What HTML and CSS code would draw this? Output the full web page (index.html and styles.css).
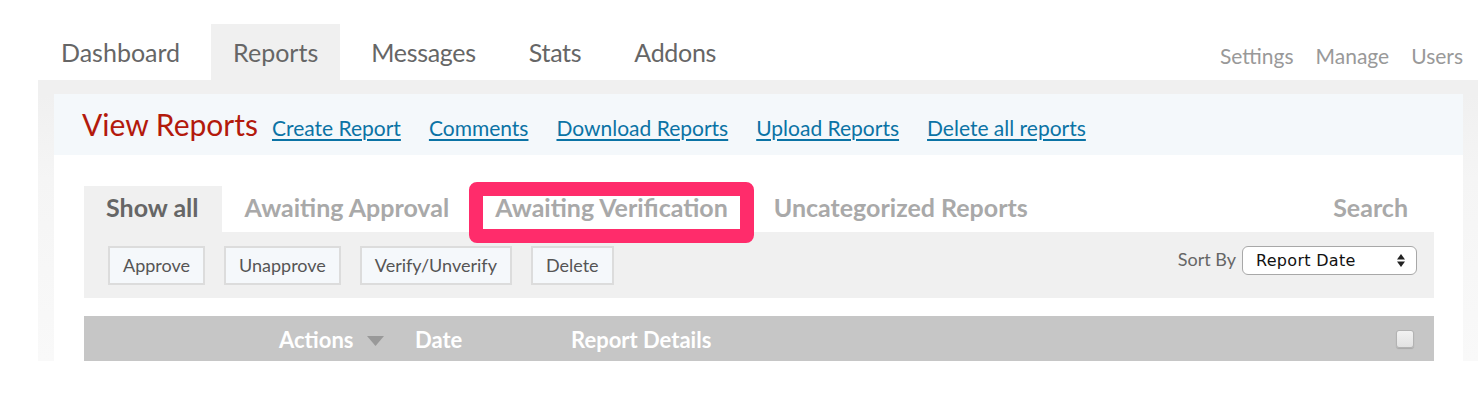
FILE: index.html
```html
<!DOCTYPE html>
<html lang="en">
<head>
<meta charset="utf-8">
<title>View Reports</title>
<link rel="stylesheet" href="styles.css">
</head>
<body>
<div class="page">
  <header class="nav">
    <ul class="tabs">
      <li class="tab">Dashboard</li>
      <li class="tab active">Reports</li>
      <li class="tab">Messages</li>
      <li class="tab">Stats</li>
      <li class="tab">Addons</li>
    </ul>
    <ul class="util">
      <li>Settings</li>
      <li>Manage</li>
      <li>Users</li>
    </ul>
  </header>
  <div class="frame">
    <div class="panel">
      <div class="panel-head">
        <h1 class="title">View Reports</h1>
        <nav class="actions">
          <a href="#">Create Report</a>
          <a href="#">Comments</a>
          <a href="#">Download Reports</a>
          <a href="#">Upload Reports</a>
          <a href="#">Delete all reports</a>
        </nav>
      </div>
      <div class="panel-body">
        <ul class="filters">
          <li class="filter active">Show all</li>
          <li class="filter">Awaiting Approval</li>
          <li class="filter highlight">Awaiting Verification</li>
          <li class="filter">Uncategorized Reports</li>
          <li class="filter search">Search</li>
        </ul>
        <div class="toolbar">
          <div class="btns">
            <button class="btn">Approve</button>
            <button class="btn">Unapprove</button>
            <button class="btn">Verify/Unverify</button>
            <button class="btn">Delete</button>
          </div>
          <div class="sort">
            <span class="sort-label">Sort By</span>
            <div class="select">
              <span>Report Date</span>
              <svg class="updown" width="8" height="13" viewBox="0 0 8 13"><polygon points="0,5.5 4,0 8,5.5" fill="#222"/><polygon points="0,7.5 8,7.5 4,13" fill="#222"/></svg>
            </div>
          </div>
        </div>
        <div class="thead">
          <span class="cell"></span>
          <span class="cell sortable">Actions <svg class="caret" width="17" height="10" viewBox="0 0 17 10"><polygon points="0,0 17,0 8.5,10" fill="#999"/></svg></span>
          <span class="cell">Date</span>
          <span class="cell">Report Details</span>
          <span class="cell check"><span class="checkbox"></span></span>
        </div>
      </div>
    </div>
  </div>
</div>
</body>
</html>
```
FILE: styles.css
```css
* { box-sizing: border-box; }
body {
  margin: 0;
  background: #fff;
  font-family: Lato, "Open Sans", sans-serif;
}
ul { list-style: none; margin: 0; padding: 0; }

.page {
  margin-left: 38px;
  width: 1440px;
}

.nav {
  display: flex;
  align-items: flex-end;
  height: 80px;
}
.tabs {
  display: flex;
  gap: 9px;
  padding-left: 1px;
}
.tab {
  height: 56px;
  line-height: 56px;
  padding: 0 22px;
  font-size: 25px;
  color: #666;
}
.tab:nth-child(n+3) { letter-spacing: -0.3px; }
.tab.active { background: #f0f0f0; }

.util {
  margin-left: auto;
  display: flex;
  gap: 22px;
  padding-right: 15px;
  font-size: 21px;
  line-height: 48px;
  color: #999;
}

.frame {
  background: linear-gradient(to bottom, #f0f0f0 0, #f0f0f0 16px, #f5f5f5 35%, #f9f9f9 100%);
  padding: 14px 15px 0 16px;
}
.panel { background: #fff; }

.panel-head {
  height: 61px;
  background: #f4f8fb;
  display: flex;
  align-items: baseline;
  padding: 12px 0 0 28px;
}
.title {
  margin: 0 14px 0 0;
  font-size: 30px;
  font-weight: 400;
  line-height: 37px;
  color: #b31a0c;
}
.actions { display: flex; gap: 28px; }
.actions a {
  font-size: 21px;
  color: #0b73a5;
  text-decoration: underline;
  text-decoration-thickness: 2px;
  text-underline-offset: 3px;
}

.panel-body { padding: 31px 29px 0 30px; }

.filters {
  display: flex;
  height: 46px;
}
.filter {
  position: relative;
  padding: 0 23px;
  line-height: 42px;
  font-size: 25px;
  font-weight: 700;
  color: #a9a9a9;
}
.filter.active {
  background: #f0f0f0;
  color: #666;
  padding: 0 23px 0 22px;
}
.filter.search {
  margin-left: auto;
  padding-right: 26px;
}
.filter.highlight::after {
  content: "";
  position: absolute;
  left: -3px;
  right: -3px;
  top: -4px;
  bottom: -11px;
  border: 14px solid #ff2c6b;
  border-radius: 8px;
}

.toolbar {
  display: flex;
  justify-content: space-between;
  align-items: flex-start;
  height: 66px;
  padding: 14px 17px 0 24px;
  background: #f0f0f0;
}
.btns { display: flex; gap: 19px; }
.btn {
  height: 39px;
  padding: 0 13px;
  border: 2px solid #dcdcdc;
  border-radius: 0;
  background: #f5f8fb;
  font-family: Lato, "Open Sans", sans-serif;
  font-size: 18px;
  line-height: 35px;
  color: #555;
}
.sort {
  display: flex;
  align-items: baseline;
  gap: 6px;
}
.sort-label {
  font-size: 18px;
  color: #666;
}
.select {
  display: flex;
  align-items: center;
  justify-content: space-between;
  width: 175px;
  height: 29px;
  padding: 0 11px 0 13px;
  border: 1px solid #a8a8a8;
  border-radius: 6px;
  background: #fff;
  font-family: "DejaVu Sans", sans-serif;
  font-size: 16px;
  letter-spacing: 0.3px;
  line-height: 27px;
  color: #111;
}
.updown { display: block; }

.thead {
  display: grid;
  grid-template-columns: 195px 136px 156px 1fr 37px;
  height: 45px;
  margin-top: 18px;
  padding-top: 3px;
  background: #c6c6c6;
  color: #fff;
  font-size: 22px;
  font-weight: 700;
  line-height: 42px;
}
.cell { white-space: nowrap; }
.sortable { display: flex; align-items: center; gap: 14px; }
.caret { display: block; margin-top: 2px; }
.check {
  display: flex;
  align-items: center;
  margin-top: -3px;
}
.checkbox {
  display: block;
  width: 18px;
  height: 18px;
  margin-left: -1px;
  border: 1px solid #b3b3b3;
  border-radius: 3px;
  background: linear-gradient(#f2f2f2, #e2e2e2);
  box-shadow: 0 1px 1px rgba(0,0,0,0.15);
}
```
